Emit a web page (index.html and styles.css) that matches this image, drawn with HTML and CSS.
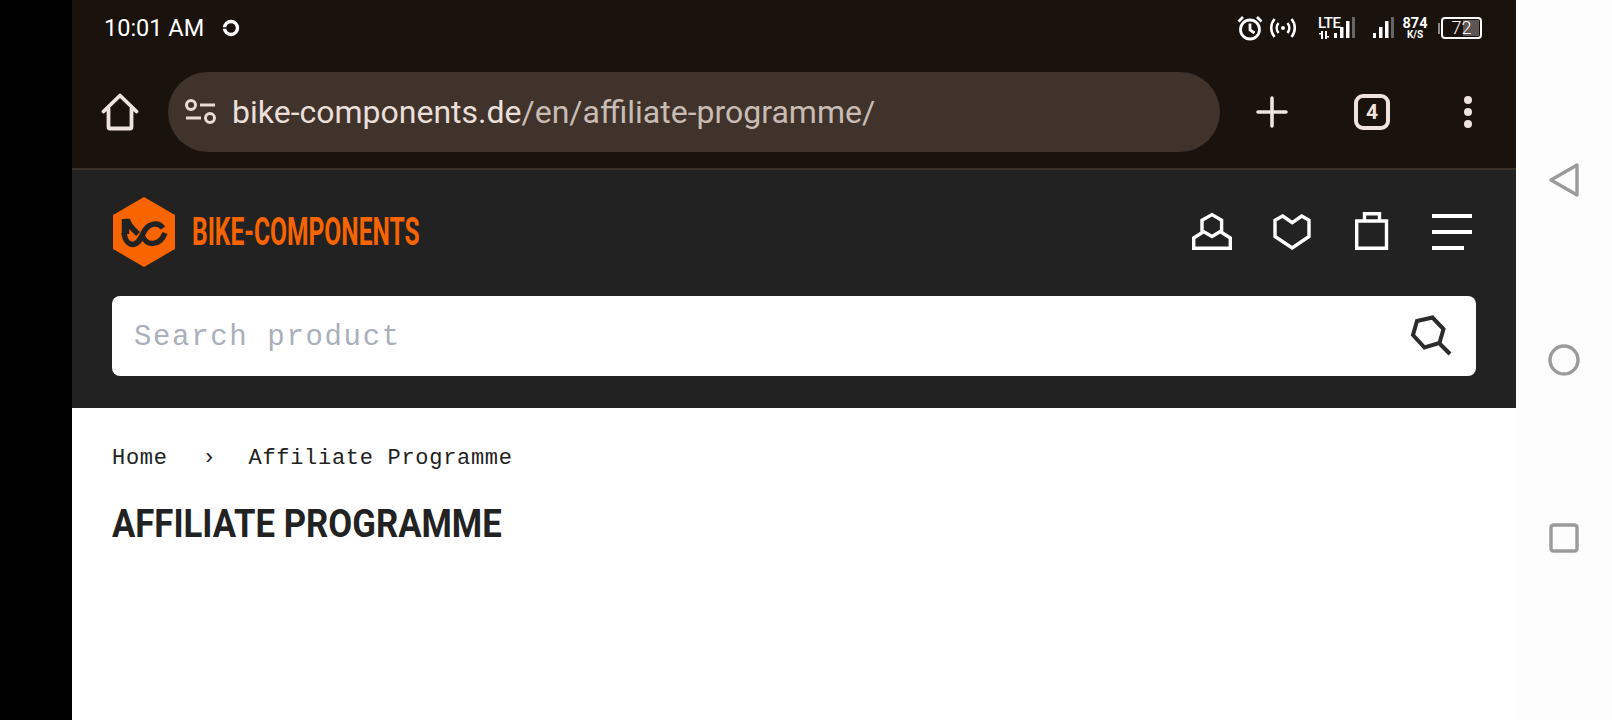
FILE: index.html
```html
<!DOCTYPE html>
<html lang="en">
<head>
    <meta charset="UTF-8">
    <title>Affiliate Programme</title>
    <link rel="stylesheet" href="styles.css">
</head>
<body>
    <div class="side-black"></div>

    <div class="screen">
        <!-- Status bar -->
        <div class="status-bar">
            <span class="time">10:01 AM</span>
            <svg class="sync" width="18" height="18" viewBox="0 0 18 18"><circle cx="9" cy="9" r="6.500" fill="none" stroke="#fff" stroke-width="3.400"/><path d="M0 9h5" stroke="#1a120d" stroke-width="1.500"/></svg>
            <div class="status-icons">
                <svg width="28" height="28" viewBox="0 0 28 28" fill="none" stroke="#fff" stroke-width="2.800"><circle cx="14" cy="15.500" r="9.500"/><path d="M14 9.500v6.500l4.500 3M2.500 7.500 7 3M25.500 7.500 21 3"/></svg>
                <svg class="hotspot" width="28" height="24" viewBox="0 0 28 24" fill="none" stroke="#fff" stroke-width="2.600"><circle cx="14" cy="12" r="2" fill="#fff" stroke="none"/><path d="M9.500 7a8 8 0 0 0 0 10M18.500 7a8 8 0 0 1 0 10M5.500 3a14 14 0 0 0 0 18M22.500 3a14 14 0 0 1 0 18"/></svg>
                <div class="lte">
                    <div class="lte-text">LTE
                        <svg class="lte-arrows" width="10" height="8" viewBox="0 0 10 8"><path fill="#fff" d="M2 0h2v8H2zM0 2h2v1.500H0zM6 0h2v8H6zM8 5h2v1.500H8z"/></svg>
                    </div>
                    <svg width="21" height="24" viewBox="0 0 21 24"><path fill="#fff" d="M0 17h3v5H0zM6 11h3.500v11H6zM12 5h3.500v17H12z"/><path fill="#666" d="M18 1h3v21h-3z"/></svg>
                </div>
                <svg class="signal" width="21" height="24" viewBox="0 0 21 24"><path fill="#fff" d="M0 17h3v5H0zM6 11h3.500v11H6zM12 5h3.500v17H12z"/><path fill="#666" d="M18 1h3v21h-3z"/></svg>
                <div class="speed">874<small>K/S</small></div>
                <div class="battery-tip"></div>
                <div class="battery"><div class="battery-fill"></div><span>72</span></div>
            </div>
        </div>

        <!-- Browser toolbar -->
        <div class="toolbar">
            <svg class="home" width="38" height="38" viewBox="0 0 38 38" fill="none" stroke="#efe3dd" stroke-width="3.800" stroke-linejoin="round" stroke-linecap="round"><path d="M2.500 18.500 19 2.500l16.500 16M7.500 15.500V34a1.500 1.500 0 0 0 1.500 1.500h20a1.500 1.500 0 0 0 1.500-1.500V15.500"/></svg>
            <div class="url-bar">
                <svg width="32" height="26" viewBox="0 0 32 26" fill="none" stroke="#e8dcd6" stroke-width="3"><circle cx="6" cy="6" r="4.500"/><circle cx="25" cy="19" r="4.500"/><path d="M15 6h15M1 19h15"/></svg>
                <span class="url"><b>bike-components.de</b>/en/affiliate-programme/</span>
            </div>
            <svg class="plus" width="32" height="32" viewBox="0 0 32 32" fill="none" stroke="#efe3dd" stroke-width="3.600" stroke-linecap="round"><path d="M2 16h28M16 2v28"/></svg>
            <div class="tabs">4</div>
            <div class="dots"><i></i><i></i><i></i></div>
        </div>

        <!-- Site header -->
        <header class="site-header">
            <div class="header-top">
                <div class="logo">
                    <svg width="64" height="70" viewBox="0 0 64 70">
                        <path fill="#f76400" d="M32 0 63 18v34L32 70 1 52V18z"/>
                        <g fill="none" stroke="#222" stroke-width="5.500">
                            <path d="M13.500 22V37" stroke-width="7.500"/>
                            <path d="M13 24.500H16C18 30 22 33 26 37"/>
                            <path d="M12 36C13 44 17 47.500 21 47.500 28 47 29 39 33 33 37 27 46 24 51 31"/>
                            <path d="M30 38C34 50 48 49 53 36"/>
                        </g>
                    </svg>
                    <span class="logo-text">BIKE-COMPONENTS</span>
                </div>
                <div class="header-icons">
                    <svg class="icon-user" width="40" height="40" viewBox="0 0 40 40" fill="none" stroke="#fff" stroke-width="3.400"><path d="M20 2.600 29.600 8.200V18.800L20 24.500 10 18.800V8.200zM11 20 1.700 26V36.300H38.300V26L29 20"/></svg>
                    <svg class="icon-heart" width="38" height="36" viewBox="0 0 38 36" fill="none" stroke="#fff" stroke-width="3.400"><path d="M9.700 2 19.200 8.700 28.700 2 36 6.300V22.500L19.200 34 2 22.500V6.300z"/></svg>
                    <svg class="icon-bag" width="34" height="40" viewBox="0 0 34 40" fill="none" stroke="#fff" stroke-width="3.400"><path d="M1.700 9H31.500V36.300H1.700zM9.500 9V1.700H24.500V9"/></svg>
                    <div class="burger"><i></i><i></i><i class="short"></i></div>
                </div>
            </div>
            <div class="search">
                <span class="placeholder">Search product</span>
                <svg width="42" height="42" viewBox="0 0 42 42" fill="none" stroke="#2b2b2b" stroke-width="4"><path d="M7 6 22.500 2.500 33.500 14 29.500 28 14.500 32.500 3 20zM30 29 40 39"/></svg>
            </div>
        </header>

        <!-- Page body -->
        <main class="content">
            <nav class="breadcrumb"><span>Home</span><span class="sep">›</span><span>Affiliate Programme</span></nav>
            <h1>AFFILIATE PROGRAMME</h1>
        </main>
    </div>

    <!-- Android nav -->
    <div class="nav-bar">
        <svg width="30" height="34" viewBox="0 0 30 34" fill="none" stroke="#9b9b9b" stroke-width="3.400" stroke-linejoin="round"><path d="M28 2v30L2 17z"/></svg>
        <svg width="32" height="32" viewBox="0 0 32 32" fill="none" stroke="#9b9b9b" stroke-width="3.400"><circle cx="16" cy="16" r="14"/></svg>
        <svg width="30" height="30" viewBox="0 0 30 30" fill="none" stroke="#9b9b9b" stroke-width="3.400"><rect x="2" y="2" width="26" height="26" rx="2.500"/></svg>
    </div>
</body>
</html>
```

FILE: styles.css
```css
html, body {
    margin: 0;
    height: 720px;
    overflow: hidden;
}
body {
    display: flex;
    background: #fdfdfd;
    font-family: 'Roboto', sans-serif;
}
.side-black {
    width: 72px;
    background: #000;
    flex: none;
}
.screen {
    width: 1444px;
    flex: none;
    background: #fff;
}

/* status bar */
.status-bar {
    height: 56px;
    background: #1a120d;
    display: flex;
    align-items: center;
    padding: 0 34px 0 32px;
    color: #fff;
}
.time {
    font-size: 23.500px;
    line-height: 56px;
}
.sync {
    margin-left: 18px;
}
.status-icons {
    margin-left: auto;
    display: flex;
    align-items: center;
}
.hotspot {
    margin-left: 5px;
}
.lte {
    margin-left: 21px;
    display: flex;
    align-items: center;
}
.lte-text {
    font-size: 15px;
    line-height: 13px;
    font-weight: 500;
    width: 16px;
    letter-spacing: -0.400px;
    white-space: nowrap;
}
.lte-arrows {
    display: block;
    margin: 1px 0 0 1px;
}
.signal {
    margin-left: 18px;
}
.speed {
    margin-left: 8px;
    font-size: 14.500px;
    line-height: 13px;
    font-weight: 700;
    text-align: center;
    width: 26px;
}
.speed small {
    display: block;
    font-size: 10px;
    line-height: 9px;
}
.battery-tip {
    margin-left: 10px;
    width: 2px;
    height: 11px;
    background: #8a8a8a;
}
.battery {
    position: relative;
    margin-left: 1px;
    width: 41px;
    height: 22px;
    box-sizing: border-box;
    border: 2px solid #fff;
    border-radius: 4px;
    font-size: 18px;
    line-height: 18px;
    text-align: center;
    font-weight: 300;
}
.battery span {
    position: relative;
}
.battery-fill {
    position: absolute;
    right: 1px;
    top: 1px;
    bottom: 1px;
    width: 16px;
    background: #5d5653;
}

/* toolbar */
.toolbar {
    height: 112px;
    background: #1a120d;
    display: flex;
    align-items: center;
}
.home {
    margin-left: 29px;
}
.url-bar {
    margin-left: 29px;
    width: 1052px;
    height: 80px;
    box-sizing: border-box;
    padding-left: 17px;
    border-radius: 40px;
    background: #40332c;
    display: flex;
    align-items: center;
    gap: 15px;
}
.url {
    font-size: 32px;
    color: #c9bcb4;
}
.url b {
    font-weight: 400;
    color: #ebdfd9;
}
.plus {
    margin-left: 36px;
}
.tabs {
    margin-left: 66px;
    width: 36px;
    height: 36px;
    box-sizing: border-box;
    border: 4px solid #efe3dd;
    border-radius: 9px;
    color: #efe3dd;
    font-size: 21px;
    font-weight: 700;
    text-align: center;
    line-height: 28px;
}
.dots {
    margin-left: 74px;
    display: flex;
    flex-direction: column;
    gap: 4px;
}
.dots i {
    width: 8px;
    height: 8px;
    border-radius: 50%;
    background: #efe3dd;
}

/* site header */
.site-header {
    height: 240px;
    box-sizing: border-box;
    background: #222;
    border-top: 2px solid #3a3029;
    padding: 27px 40px 32px;
}
.header-top {
    height: 70px;
    display: flex;
    align-items: center;
    justify-content: space-between;
}
.logo {
    display: flex;
    align-items: center;
}
.logo-text {
    margin-left: 16px;
    font-size: 39px;
    font-weight: 700;
    color: #f76400;
    display: inline-block;
    transform-origin: left center;
    transform: scaleX(0.630);
    white-space: nowrap;
}
.header-icons {
    display: flex;
    align-items: center;
    padding-right: 4px;
}
.header-icons svg {
    overflow: visible;
}
.icon-heart {
    margin-left: 41px;
}
.icon-bag {
    margin-left: 44px;
}
.burger {
    margin-left: 43px;
    width: 40px;
    height: 36px;
    display: flex;
    flex-direction: column;
    justify-content: space-between;
}
.burger i {
    height: 4px;
    background: #fff;
}
.burger i.short {
    width: 32px;
}
.search {
    margin-top: 29px;
    height: 80px;
    background: #fff;
    border-radius: 8px;
    display: flex;
    align-items: center;
    justify-content: space-between;
    padding: 0 24px 0 22px;
}
.placeholder {
    font-family: 'Liberation Mono', monospace;
    font-size: 29px;
    letter-spacing: 1.650px;
    line-height: 34px;
    padding-top: 4px;
    color: #a9afbb;
}

/* content */
.content {
    padding: 38px 40px 0;
}
.breadcrumb {
    display: flex;
    font-family: 'Liberation Mono', monospace;
    font-size: 22px;
    letter-spacing: 0.700px;
    line-height: 26px;
    color: #222;
}
.sep {
    margin: 0 32px 0 35px;
}
h1 {
    margin: 30px 0 0;
    font-size: 39px;
    line-height: 44px;
    font-weight: 700;
    color: #222;
    white-space: nowrap;
    transform-origin: left center;
    transform: scaleX(0.890);
}

/* android nav */
.nav-bar {
    flex: 1;
    display: flex;
    flex-direction: column;
    align-items: center;
    padding-top: 163px;
    gap: 147px;
}
```
